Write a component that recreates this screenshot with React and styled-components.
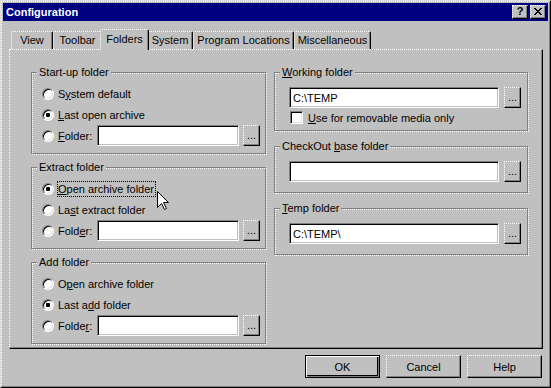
import React from 'react';
import styled, { createGlobalStyle, css } from 'styled-components';

const GlobalStyle = createGlobalStyle`
  html, body { margin: 0; padding: 0; background: #c0c0c0; }
  body {
    font-family: "Liberation Sans", Arial, sans-serif;
    font-size: 11px;
    color: #000;
  }
  * { box-sizing: border-box; }
`;

const raised = css`
  background: #c0c0c0;
  border-top: 1px dotted #fff;
  border-left: 1px dotted #fff;
  border-right: 1px solid #000;
  border-bottom: 1px solid #000;
  box-shadow: inset -1px -1px 0 #808080;
`;

const Window = styled.div`
  width: 551px;
  height: 388px;
  background: #c0c0c0;
  border: 1px solid;
  border-color: #dfdfdf #000 #000 #dfdfdf;
`;

const Frame = styled.div`
  height: 100%;
  padding: 1px;
  border-top: 1px dotted #fff;
  border-left: 1px dotted #fff;
  border-right: 1px solid #808080;
  border-bottom: 1px solid #808080;
  display: flex;
  flex-direction: column;
`;

const TitleBar = styled.div`
  height: 18px;
  background: #000080;
  display: flex;
  align-items: center;
  padding: 0 2px 0 3px;
`;

const TitleText = styled.div`
  color: #fff;
  font-weight: bold;
  font-size: 11px;
  flex: 1;
`;

const TitleButtons = styled.div`
  display: flex;
  gap: 2px;
`;

const TitleButton = styled.div`
  ${raised}
  width: 16px;
  height: 14px;
  display: flex;
  align-items: center;
  justify-content: center;
  font-weight: bold;
  font-size: 11px;
  line-height: 1;
  padding-bottom: 1px;
`;

const Client = styled.div`
  flex: 1;
  padding: 8px 5px 0 6px;
  display: flex;
  flex-direction: column;
`;

const TabStrip = styled.div`
  height: 20px;
  display: flex;
  align-items: flex-end;
  padding-left: 2px;
  position: relative;
  z-index: 1;
`;

const Tab = styled.div`
  width: ${(p) => p.$w}px;
  height: 18px;
  display: flex;
  align-items: center;
  justify-content: center;
  padding-bottom: 1px;
  background: #c0c0c0;
  border-top: 1px dotted #fff;
  border-left: 1px dotted #fff;
  border-right: 1px solid #000;
  border-radius: 2px 2px 0 0;
  box-shadow: inset -1px 0 0 #808080;
  white-space: nowrap;
  ${(p) =>
    p.$active &&
    css`
      width: ${p.$w + 4}px;
      height: 21px;
      margin: 0 -2px -1px;
      padding-bottom: 2px;
      position: relative;
      z-index: 2;
    `}
`;

const Panel = styled.div`
  position: relative;
  height: 300px;
  border-top: 1px dotted #fff;
  border-left: 1px dotted #fff;
  border-right: 1px solid #000;
  border-bottom: 1px solid #000;
  box-shadow: inset -1px -1px 0 #808080;
`;

const Columns = styled.div`
  display: grid;
  grid-template-columns: 236px 255px;
  column-gap: 7px;
  align-items: start;
  padding: 22px 0 0 21px;
`;

const Column = styled.div`
  display: flex;
  flex-direction: column;
  gap: ${(p) => p.$gap}px;
`;

const Group = styled.div`
  position: relative;
  height: ${(p) => p.$h}px;
  margin: 0 1px 1px 0;
  border: 1px solid #808080;
  padding: ${(p) => p.$pad};
  &::before {
    content: '';
    position: absolute;
    left: 0;
    top: 0;
    right: -2px;
    bottom: -2px;
    border: 1px dotted #fff;
    pointer-events: none;
  }
`;

const Legend = styled.div`
  position: absolute;
  top: -7px;
  left: 5px;
  padding: 0 2px;
  line-height: 13px;
  background: #c0c0c0;
  z-index: 1;
  white-space: nowrap;
`;

const Row = styled.div`
  display: flex;
  align-items: center;
  height: ${(p) => p.$h || 21}px;
  gap: ${(p) => p.$gap || 0}px;
  white-space: nowrap;
`;

const Radio = styled.span`
  position: relative;
  flex: none;
  width: 12px;
  height: 12px;
  margin-right: 4px;
  border-radius: 50%;
  background: #fff;
  border: 1px solid;
  border-color: #808080 #fff #fff #808080;
  box-shadow: inset 1px 1px 0 #000, inset -1px -1px 0 #dfdfdf;
  ${(p) =>
    p.$checked &&
    css`
      &::after {
        content: '';
        position: absolute;
        left: 3px;
        top: 3px;
        width: 4px;
        height: 4px;
        border-radius: 1px;
        background: #000;
      }
    `}
`;

const Check = styled.span`
  flex: none;
  width: 13px;
  height: 13px;
  margin: 0 5px 0 1px;
  background: #fff;
  border-top: 1px solid #808080;
  border-left: 1px solid #808080;
  border-right: 1px dotted #fff;
  border-bottom: 1px dotted #fff;
  box-shadow: inset 1px 1px 0 #000, inset -1px -1px 0 #dfdfdf;
`;

const Focus = styled.span`
  border: 1px dotted #000;
  line-height: 14px;
  padding: 0 1px 0 0;
  margin-left: -1px;
`;

const FolderLabel = styled.span`
  width: 39px;
  flex: none;
`;

const TextBox = styled.div`
  width: ${(p) => p.$w}px;
  height: 21px;
  flex: none;
  background: #fff;
  border-top: 1px solid #808080;
  border-left: 1px solid #808080;
  border-right: 1px dotted #fff;
  border-bottom: 1px dotted #fff;
  box-shadow: inset 1px 1px 0 #000, inset -1px -1px 0 #c0c0c0;
  padding: 0 3px;
  display: flex;
  align-items: center;
  white-space: nowrap;
`;

const Browse = styled.div`
  ${raised}
  width: 17px;
  height: 21px;
  flex: none;
  display: flex;
  align-items: center;
  justify-content: center;
  padding-bottom: 1px;
`;

const ButtonRow = styled.div`
  display: flex;
  justify-content: flex-end;
  gap: 6px;
  margin-top: 6px;
  padding-right: 1px;
`;

const Button = styled.div`
  ${raised}
  width: 75px;
  height: 23px;
  display: flex;
  align-items: center;
  justify-content: center;
  ${(p) =>
    p.$default &&
    css`
      border: 1px solid #000;
      box-shadow: inset 1px 1px 0 #fff, inset -1px -1px 0 #808080,
        inset -2px -2px 0 #000;
    `}
`;

const Cursor = styled.svg`
  position: absolute;
  left: 147px;
  top: 141px;
  z-index: 5;
`;

const CloseGlyph = () => (
  <svg width="8" height="7" viewBox="0 0 8 7" shapeRendering="crispEdges">
    <path
      fill="#000"
      d="M0 0h2v1h-2zM6 0h2v1h-2zM1 1h2v1h-2zM5 1h2v1h-2zM2 2h4v1h-4zM3 3h2v1h-2zM2 4h4v1h-4zM1 5h2v1h-2zM5 5h2v1h-2zM0 6h2v1h-2zM6 6h2v1h-2z"
    />
  </svg>
);

const tabs = [
  { label: 'View', w: 42 },
  { label: 'Toolbar', w: 49 },
  { label: 'Folders', w: 45, active: true },
  { label: 'System', w: 46 },
  { label: 'Program Locations', w: 101 },
  { label: 'Miscellaneous', w: 77 },
];

const RadioOption = ({ checked, children }) => (
  <Row>
    <Radio $checked={checked} />
    {children}
  </Row>
);

const FolderRow = ({ label }) => (
  <Row>
    <Radio />
    <FolderLabel>{label}</FolderLabel>
    <TextBox $w={142} />
    <Browse style={{ marginLeft: 4 }}>...</Browse>
  </Row>
);

const PathRow = ({ value }) => (
  <Row $gap={5}>
    <TextBox $w={210}>{value}</TextBox>
    <Browse>...</Browse>
  </Row>
);

export default function App() {
  return (
    <>
      <GlobalStyle />
      <Window>
        <Frame>
          <TitleBar>
            <TitleText>Configuration</TitleText>
            <TitleButtons>
              <TitleButton>?</TitleButton>
              <TitleButton>
                <CloseGlyph />
              </TitleButton>
            </TitleButtons>
          </TitleBar>
          <Client>
            <TabStrip>
              {tabs.map((t) => (
                <Tab key={t.label} $w={t.w} $active={t.active}>
                  {t.label}
                </Tab>
              ))}
            </TabStrip>
            <Panel>
              <Columns>
                <Column $gap={12}>
                  <Group $h={82} $pad="10px 0 0 10px">
                    <Legend>Start-up folder</Legend>
                    <RadioOption>
                      <span>
                        S<u>y</u>stem default
                      </span>
                    </RadioOption>
                    <RadioOption checked>
                      <span>
                        <u>L</u>ast open archive
                      </span>
                    </RadioOption>
                    <FolderRow
                      label={
                        <>
                          <u>F</u>older:
                        </>
                      }
                    />
                  </Group>
                  <Group $h={82} $pad="10px 0 0 10px">
                    <Legend>Extract folder</Legend>
                    <RadioOption checked>
                      <Focus>
                        <u>O</u>pen archive folder
                      </Focus>
                    </RadioOption>
                    <RadioOption>
                      <span>
                        La<u>s</u>t extract folder
                      </span>
                    </RadioOption>
                    <FolderRow
                      label={
                        <>
                          Fold<u>e</u>r:
                        </>
                      }
                    />
                  </Group>
                  <Group $h={82} $pad="10px 0 0 10px">
                    <Legend>Add folder</Legend>
                    <RadioOption>
                      <span>
                        O<u>p</u>en archive folder
                      </span>
                    </RadioOption>
                    <RadioOption checked>
                      <span>
                        Last a<u>d</u>d folder
                      </span>
                    </RadioOption>
                    <FolderRow
                      label={
                        <>
                          Folde<u>r</u>:
                        </>
                      }
                    />
                  </Group>
                </Column>
                <Column $gap={14}>
                  <Group $h={59} $pad="14px 0 0 14px">
                    <Legend>
                      <u>W</u>orking folder
                    </Legend>
                    <PathRow value="C:\TEMP" />
                    <Row $h={19}>
                      <Check />
                      <span>
                        <u>U</u>se for removable media only
                      </span>
                    </Row>
                  </Group>
                  <Group $h={47} $pad="14px 0 0 14px">
                    <Legend>
                      CheckOut <u>b</u>ase folder
                    </Legend>
                    <PathRow value="" />
                  </Group>
                  <Group $h={47} $pad="14px 0 0 14px">
                    <Legend>
                      <u>T</u>emp folder
                    </Legend>
                    <PathRow value="C:\TEMP\" />
                  </Group>
                </Column>
              </Columns>
              <Cursor width="13" height="20" viewBox="0 0 13 20">
                <path
                  d="M0.5 0.5V16.5L4.5 12.5L7.5 18.5L9.5 17.5L6.5 11.5H11.5Z"
                  fill="#fff"
                  stroke="#000"
                  strokeWidth="1"
                  strokeLinejoin="miter"
                />
              </Cursor>
            </Panel>
            <ButtonRow>
              <Button $default>OK</Button>
              <Button>Cancel</Button>
              <Button>Help</Button>
            </ButtonRow>
          </Client>
        </Frame>
      </Window>
    </>
  );
}
